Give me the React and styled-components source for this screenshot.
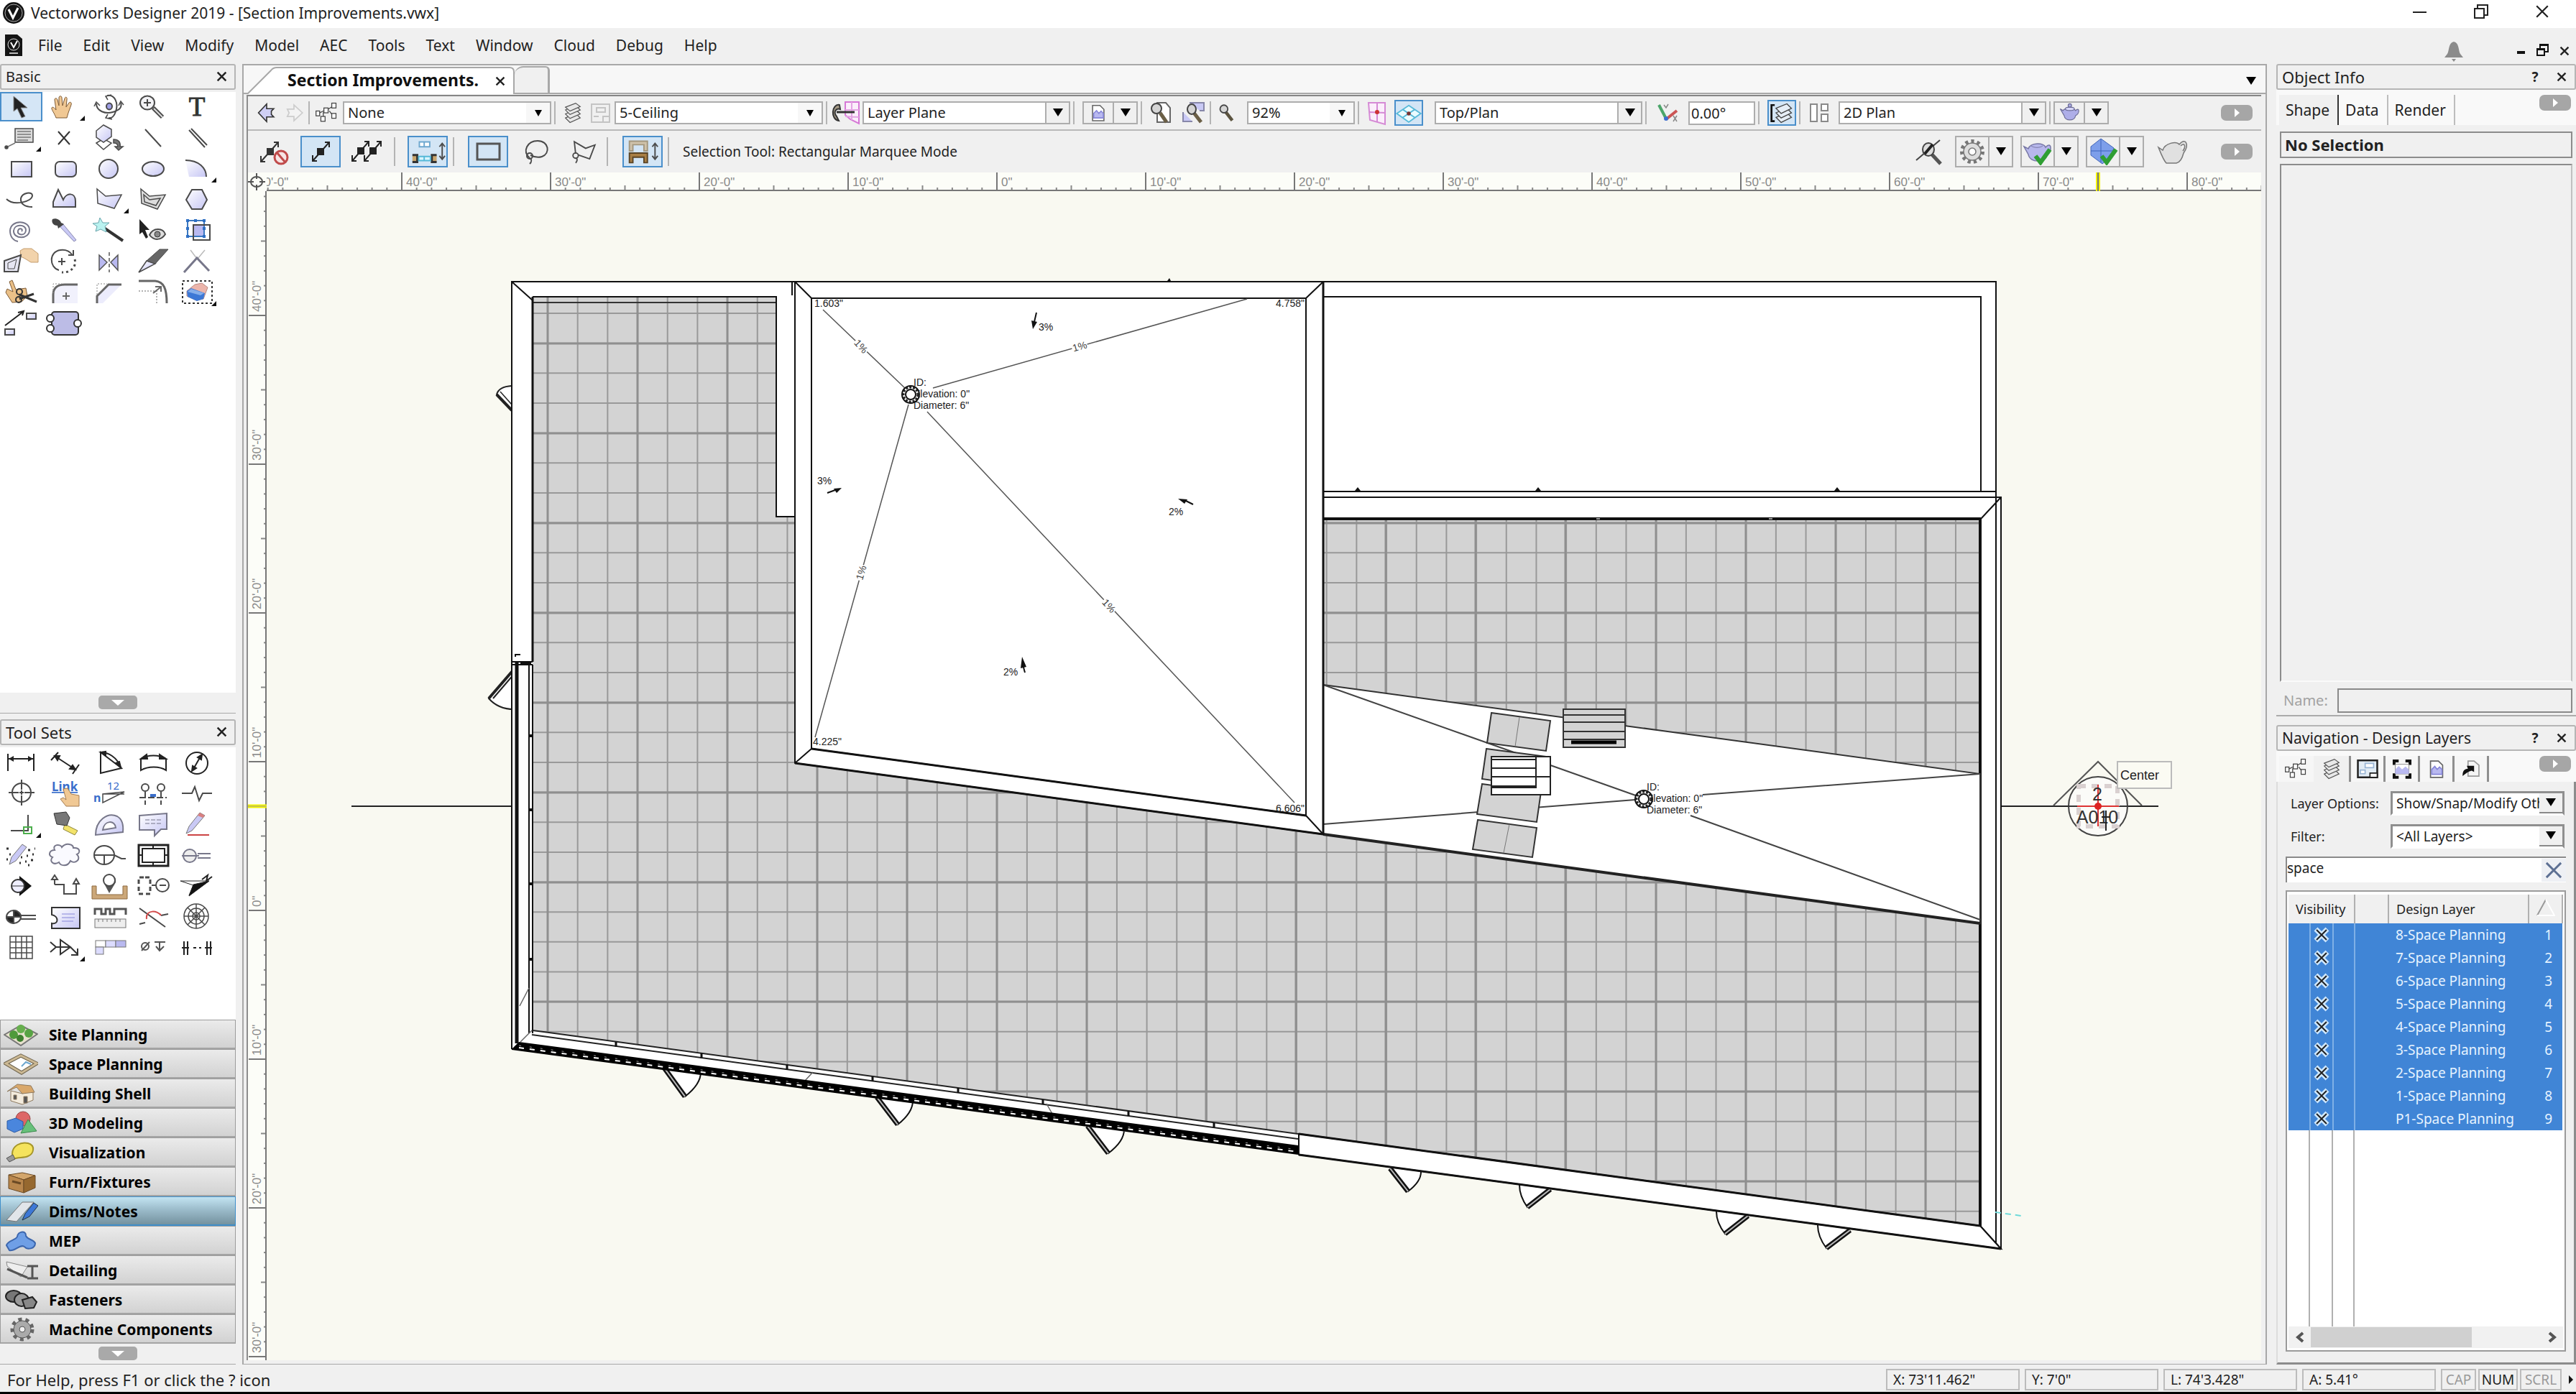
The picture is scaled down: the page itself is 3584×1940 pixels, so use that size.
import React from "react";
import styled, { createGlobalStyle, css } from "styled-components";

const GlobalStyle = createGlobalStyle`
  * { box-sizing: border-box; }
  body { margin: 0; background: #f0f0f0; }
  button, select, input { font: inherit; color: inherit; margin: 0; }
  button { background: none; border: 0; padding: 0; }
`;

const Window = styled.div`
  min-height: 100vh;
  display: grid;
  grid-template-rows: 39px 50px 1fr 38px;
  border-bottom: 3px solid #000;
  background: #f0f0f0;
  color: #222;
  font-family: "Noto Sans", "Open Sans", sans-serif;
  font-size: 21px;
  line-height: 24px;
`;

const TitleBar = styled.header`
  display: flex;
  align-items: center;
  gap: 8px;
  padding: 0 34px 4px 3px;
  background: #fff;
`;

const Spring = styled.div`
  flex: 1;
`;

const WindowButton = styled.button`
  width: 26px;
  height: 26px;
  margin-left: 51px;
`;

const MenuBar = styled.nav`
  display: flex;
  align-items: center;
  padding: 0 4px 3px 6px;
`;

const MenuItem = styled.button`
  margin-left: ${(p) => (p.$first ? 21 : 29)}px;
`;

const MdiButton = styled.button`
  width: 24px;
  height: 24px;
  margin: 14px 0 0 ${(p) => p.$gap || 6}px;
`;

const Workspace = styled.div`
  display: grid;
  grid-template-columns: 328px 1fr 417px;
  min-height: 0;
`;

const Column = styled.aside`
  display: flex;
  flex-direction: column;
  min-width: 0;
`;

const PanelTitle = styled.div`
  display: flex;
  align-items: center;
  flex: none;
  height: 36px;
  padding: 0 8px 0 6px;
  border: 2px solid #b5b5b5;
  border-radius: 3px;
  font-size: ${(p) => p.$size || 20}px;
`;

const PanelButton = styled.button`
  width: 20px;
  height: 26px;
  margin-left: 17px;
  font-size: 19px;
  font-weight: bold;
`;

const ToolPanel = styled.div`
  display: grid;
  grid-template-columns: repeat(5, 61px);
  grid-auto-rows: 41px;
  align-content: start;
  row-gap: 2px;
  margin-top: 3px;
  background: #fff;
  ${(p) => (p.$grow ? "flex: 1;" : "height: 379px;")}
`;

const ToolButton = styled.button`
  display: flex;
  align-items: center;
  justify-content: center;
  width: 59px;
  height: 41px;
  svg {
    overflow: visible;
  }
  ${(p) =>
    p.$active &&
    css`
      background: #d5e6f6;
      outline: 2px solid #4a8fcb;
      outline-offset: -2px;
    `}
`;

const FoldRow = styled.div`
  display: flex;
  justify-content: center;
  flex: none;
  height: 29px;
  padding-top: 4px;
  border-bottom: 1px solid #a8a8a8;
  margin-bottom: ${(p) => (p.$last ? 0 : 8)}px;
`;

const FoldButton = styled.button`
  display: grid;
  place-items: center;
  width: 54px;
  height: 19px;
  border-radius: 5px;
  background: #a9a9a9;
`;

const SetList = styled.div`
  display: flex;
  flex-direction: column;
`;

const SetButton = styled.button`
  display: flex;
  align-items: center;
  gap: 15px;
  height: 41px;
  padding: 2px 0 0 4px;
  border: 1px solid #9c9c9c;
  border-bottom: 2px solid #a4a4a4;
  background: ${(p) =>
    p.$active
      ? "linear-gradient(#c3e4f2, #9cbccb 45%, #74929f)"
      : "linear-gradient(#ebebeb, #d2d2d2)"};
  ${(p) => p.$active && "border-color: #3f8fca;"}
  color: #000;
  font-size: 21px;
  font-weight: bold;
`;

const Doc = styled.main`
  display: flex;
  flex-direction: column;
  min-width: 0;
  margin: 0 13px 0 9px;
  border: 2px solid #a8a8a8;
  border-bottom-width: 1px;
`;

const TabBar = styled.div`
  display: flex;
  align-items: flex-end;
  height: 40px;
  padding: 0 10px 0 4px;
  background: #f7f7f7;
  border-bottom: 2px solid #a8a8a8;
`;

const DocTab = styled.button`
  position: relative;
  display: flex;
  align-items: center;
  justify-content: space-between;
  width: 373px;
  height: 37px;
  padding: 0 13px 0 57px;
  font-size: 23px;
  font-weight: bold;
  color: #111;
`;

const TabShape = styled.svg`
  position: absolute;
  left: 0;
  top: 0;
  z-index: 0;
`;

const TabLabel = styled.span`
  position: relative;
`;

const EmptyTab = styled.button`
  width: 49px;
  height: 37px;
  background: #f0f0f0;
  border: 1px solid #a8a8a8;
  border-width: 2px 3px 0 0;
  border-radius: 12px 6px 0 0;
`;

const TabMenu = styled.button`
  width: 20px;
  height: 36px;
`;

const Frame = styled.div`
  display: flex;
  flex-direction: column;
  flex: 1;
  margin: 1px 6px 5px 4px;
  border-top: 2px solid #858585;
  border-left: 2px solid #8d8d8d;
  font-size: 20px;
`;

const Toolbar = styled.div`
  display: flex;
  align-items: center;
  flex: none;
  gap: ${(p) => (p.$tall ? 7 : 4)}px;
  height: ${(p) => (p.$tall ? 58 : 48)}px;
  padding: 0 12px 0 8px;
  ${(p) => !p.$tall && "border-bottom: 2px solid #b9b9b9;"}
`;

const BarButton = styled.button`
  display: flex;
  align-items: center;
  justify-content: center;
  flex: none;
  width: ${(p) => p.$w}px;
  height: ${(p) => (p.$tall ? 44 : 36)}px;
  margin-right: ${(p) => p.$gap || 0}px;
  svg {
    flex: none;
  }
  ${(p) =>
    p.$active &&
    css`
      background: #d3e5f5;
      border: 2px solid #4a8fcb;
    `}
`;

const Sep = styled.div`
  flex: none;
  width: 2px;
  height: ${(p) => (p.$tall ? 40 : 32)}px;
  margin-right: ${(p) => p.$gap || 0}px;
  background: #b4b4b4;
`;

const SelectFrame = styled.div`
  display: flex;
  flex: none;
  width: ${(p) => p.$w}px;
  height: 32px;
  border: 2px solid #adadad;
  background: #fff;
`;

const SelectField = styled.select`
  flex: 1;
  min-width: 0;
  padding: 0 0 0 5px;
  border: 0;
  outline: 0;
  background: none;
  appearance: none;
`;

const ArrowCell = styled.span`
  display: grid;
  place-items: center;
  width: 33px;
  background: ${(p) => (p.$line ? "#f0f0f0" : "#f7f7f7")};
  ${(p) => p.$line && "border-left: 2px solid #adadad;"}
`;

const AngleField = styled.input`
  flex: none;
  width: 93px;
  height: 33px;
  padding: 0 2px;
  border: 2px solid #adadad;
  background: #fff;
`;

const SplitFrame = styled.div`
  display: flex;
  flex: none;
  width: ${(p) => (p.$tall ? 81 : 77)}px;
  height: ${(p) => (p.$tall ? 44 : 32)}px;
  margin-right: ${(p) => (p.$tall ? 3 : 0)}px;
  border: 2px solid #adadad;
`;

const SplitMain = styled.button`
  display: flex;
  align-items: center;
  justify-content: center;
  flex: 1;
  min-width: 0;
  svg {
    flex: none;
  }
`;

const SplitArrow = styled.button`
  display: grid;
  place-items: center;
  width: 33px;
  border-left: 2px solid #adadad;
`;

const Pill = styled.button`
  display: grid;
  place-items: center;
  flex: none;
  width: 44px;
  height: 22px;
  margin-left: auto;
  border-radius: 7px;
  background: #a6a6a6;
`;

const ModeText = styled.span`
  font-size: 19px;
  white-space: nowrap;
`;

const Sheet = styled.div`
  display: grid;
  flex: 1;
  grid-template-columns: 26px 1fr;
  grid-template-rows: 26px 1fr;
  background: #fcfdf8;
  svg text {
    font-family: "Liberation Sans", Arial, sans-serif;
  }
`;

const Corner = styled.svg`
  width: 26px;
  height: 26px;
`;

const RulerTop = styled.svg`
  width: 100%;
  height: 26px;
`;

const RulerLeft = styled.svg`
  width: 26px;
  height: 100%;
`;

const Plan = styled.svg`
  width: 100%;
  height: 100%;
  background: #f9f9f1;
`;

const TabStrip = styled.div`
  display: flex;
  align-items: stretch;
  flex: none;
  height: ${(p) => p.$h}px;
  padding: 7px 7px 0 4px;
  background: #f9f9f9;
`;

const InfoTab = styled.button`
  padding: 0 11px 0 9px;
  border-right: 2px solid ${(p) => (p.$active ? "#333" : "#bdbdbd")};
  background: ${(p) => (p.$active ? "#f0f0f0" : "none")};
`;

const IconTab = styled.button`
  display: flex;
  align-items: center;
  justify-content: center;
  width: ${(p) => (p.$active ? 52 : 48)}px;
  border-right: 3px solid ${(p) => (p.$plain ? "transparent" : "#8f8f8f")};
  background: ${(p) => (p.$active ? "#f0f0f0" : "#f6f6f6")};
  svg {
    flex: none;
  }
`;

const SelectionBox = styled.div`
  flex: none;
  height: 37px;
  margin: 9px 5px 8px;
  padding: 4px 5px;
  border: 2px solid #8c8c8c;
  font-size: 22px;
  font-weight: bold;
`;

const InfoBody = styled.div`
  flex: 1;
  margin: 0 5px;
  border: 2px solid #8c8c8c;
  border-right-color: #c0c0c0;
  border-bottom-color: #fafafa;
`;

const NameRow = styled.div`
  display: flex;
  align-items: center;
  gap: 13px;
  height: 48px;
  padding: 5px 5px 0 10px;
  margin-bottom: 12px;
  border-bottom: 2px solid #ababab;
  color: #a2a2a2;
  font-size: 20px;
`;

const NameField = styled.input`
  flex: 1;
  min-width: 0;
  height: 34px;
  border: 2px solid #8a8a8a;
  background: #f0f0f0;
`;

const NavBody = styled.div`
  display: flex;
  flex-direction: column;
  height: 811px;
  padding: 12px 11px 15px;
  border-left: 2px solid #dcdcdc;
  border-right: 3px solid #8c8c8c;
  border-bottom: 3px solid #8c8c8c;
  font-size: 19px;
`;

const OptionRow = styled.div`
  display: flex;
  align-items: center;
  justify-content: space-between;
  height: 36px;
  margin-bottom: 10px;
  padding: 0 2px 0 7px;
  font-size: 18px;
`;

const DeepSelect = styled.div`
  display: flex;
  width: 242px;
  height: 34px;
  border: 3px solid #8f8f8f;
  border-bottom-color: #fff;
  background: #fff;
  font-size: 19px;
`;

const DeepArrow = styled.span`
  display: grid;
  place-items: center;
  width: 32px;
  background: #f0f0f0;
  border-bottom: 2px solid #8a8a8a;
`;

const SearchRow = styled.div`
  display: flex;
  align-items: center;
  height: 36px;
  margin-bottom: 11px;
  border-top: 2px solid #8a8a8a;
  border-left: 2px solid #8a8a8a;
  background: #fff;
`;

const SearchField = styled.input`
  flex: 1;
  min-width: 0;
  padding: 0 0 6px;
  border: 0;
  outline: 0;
  background: none;
`;

const ClearButton = styled.button`
  display: grid;
  place-items: center;
  width: 34px;
  height: 32px;
  background: #eef0f4;
`;

const LayerBox = styled.div`
  display: flex;
  flex-direction: column;
  flex: 1;
  padding: 4px 2px 3px;
  border: 2px solid #9b9b9b;
  background: #fff;
`;

const LayerTable = styled.table`
  width: 100%;
  table-layout: fixed;
  border-collapse: collapse;
  th {
    height: 40px;
    padding: 0 0 0 10px;
    background: #f0f0f0;
    border-right: 2px solid #b0b0b0;
    font-weight: normal;
    font-size: 18px;
    text-align: left;
    white-space: nowrap;
  }
  td {
    height: 32px;
    padding: 0 0 0 10px;
    line-height: 28px;
    background: #4085d6;
    color: #e6f3ff;
    white-space: nowrap;
  }
`;

const MarkCell = styled.td`
  && {
    padding: 0;
    border-right: 2px solid #7fb0e6;
  }
  svg {
    display: block;
    margin: 0 auto;
    border: solid #7fb0e6;
    border-width: 0 2px;
  }
`;

const NumberCell = styled.td`
  && {
    padding: 0 14px 0 0;
    text-align: right;
  }
`;

const Guides = styled.div`
  display: flex;
  flex: 1;
`;

const Guide = styled.div`
  width: ${(p) => p.$w}px;
  border-right: 2px solid #b0b0b0;
`;

const ScrollBar = styled.div`
  display: grid;
  grid-template-columns: 31px 224px 1fr 31px;
  place-items: center;
  height: 30px;
  background: #f1f1f1;
`;

const Thumb = styled.div`
  width: 100%;
  height: 28px;
  background: #d0d0d0;
`;

const StatusBar = styled.footer`
  display: flex;
  align-items: center;
  gap: 3px;
  padding: 4px 3px 0 10px;
`;

const HelpText = styled.span`
  font-size: 22px;
`;

const StatusCell = styled.span`
  height: 30px;
  width: ${(p) => p.$w}px;
  padding: 1px 0 0 ${(p) => (p.$mode ? 0 : 8)}px;
  border: 2px solid #bcbcbc;
  margin-right: ${(p) => (p.$mode ? 0 : 4)}px;
  text-align: ${(p) => (p.$mode ? "center" : "left")};
  font-size: 19px;
  color: ${(p) => (p.$off ? "#9a9a9a" : "#222")};
`;

const S = "#4a4a4a";
const LAV = "url(#lavender)";

// Icons are drawn in a 54 x 38 box around (27, 19).
const icons = {
  select: <path d="M16 4V25L21 21L27 34L32 32L26 20H35Z" fill="#222" stroke="#888" />,
  pan: (
    <path
      d="M14 34C12 28 7 22 8 20C9 18 12 20 14 23L12 9C12 6 15 6 16 9L18 17V6C18 3 22 3 22 6L23 17L26 7C27 4 30 5 29 9L28 19L32 13C34 11 36 13 35 16L31 27L29 34Z"
      fill="#f0c894"
      stroke="#7d5a35"
    />
  ),
  flyover: (
    <g fill="none" stroke={S} strokeWidth="2">
      <path d="M24 3C35 1 40 14 36 25C34 32 30 35 26 34M9 14C9 25 22 29 32 26C42 23 45 19 43 13" />
      <path d="M30 2L22 4L25 9M25 29L22 34L31 36M6 18L9 12L14 17M40 17L43 11L47 16" strokeWidth="1.5" />
      <ellipse cx="27" cy="18" rx="4" ry="4.5" fill="#9f9fe6" />
    </g>
  ),
  zoom: (
    <g stroke={S} strokeWidth="2">
      <path d="M27 20L40 33" strokeWidth="6" />
      <path d="M28 21L40 33" stroke="#ddd" strokeWidth="2" />
      <ellipse cx="19" cy="13" rx="10" ry="9.5" fill="#f2f2f5" />
      <path d="M14 13H24M19 8V18" />
    </g>
  ),
  text: (
    <text x="27" y="31" textAnchor="middle" fontSize="37" fontFamily="Liberation Serif" fill="#333" stroke="#333">
      T
    </text>
  ),
  callout: (
    <g stroke={S} strokeWidth="1.5">
      <rect x="18" y="6" width="25" height="19" fill="#dcdcdc" />
      <path d="M21 10H40M21 14H40M21 18H40M21 22H36M18 26L6 32" fill="none" stroke="#777" />
      <circle cx="6" cy="32" r="2" fill={S} />
    </g>
  ),
  locus: <path d="M17 10L33 28M33 10L17 28" stroke="#333" strokeWidth="2" />,
  layerPlane: (
    <g stroke={S} strokeWidth="1.5">
      <path d="M9 26L19 20L30 26L19 35Z" fill="#fff" />
      <path d="M9 9L19 1L30 7V17L19 25L9 18Z" fill={LAV} />
      <path d="M33 21C40 21 43 25 42 31H46L40 36L35 31H39C39 27 37 26 33 26Z" fill="#777" />
    </g>
  ),
  line: <path d="M16 7L38 31" stroke={S} strokeWidth="2" />,
  doubleLine: <path d="M16 8L38 32M19 6L41 29" stroke={S} strokeWidth="2" />,
  rect: <rect x="13" y="9" width="28" height="21" fill={LAV} stroke={S} strokeWidth="2" />,
  roundRect: <rect x="13" y="9" width="29" height="21" rx="6" fill={LAV} stroke={S} strokeWidth="2" />,
  oval: <ellipse cx="26" cy="19" rx="13" ry="13" fill={LAV} stroke={S} strokeWidth="2" />,
  circle: <ellipse cx="27" cy="19" rx="15" ry="10" fill={LAV} stroke={S} strokeWidth="2" />,
  arc: (
    <g>
      <path d="M11 7C30 7 40 18 40 30H16Z" fill={LAV} />
      <path d="M11 7C30 7 40 18 40 30" fill="none" stroke={S} strokeWidth="2" />
    </g>
  ),
  freehand: (
    <path d="M6 18C16 28 42 22 42 13C42 7 28 9 26 17C25 25 32 29 42 29" fill="none" stroke={S} strokeWidth="2" />
  ),
  bezier: <path d="M10 29V22L17 5L24 19C28 9 41 8 41 21V29Z" fill={LAV} stroke={S} strokeWidth="2" />,
  polygon: <path d="M10 4L22 14L44 12L34 31L11 24Z" fill={LAV} stroke={S} strokeWidth="1.5" />,
  doublePolygon: (
    <g fill="none" stroke={S} strokeWidth="1.5">
      <path d="M10 4L22 14L44 12L33 32L11 24Z" fill="#ddd" />
      <path d="M14 12L22 19L37 17L31 27L15 22Z" />
    </g>
  ),
  hexagon: <path d="M20 5H34L41 19L34 32H20L12 19Z" fill={LAV} stroke={S} strokeWidth="2" />,
  spiral: (
    <path
      d="M27 20C30 17 24 14 22 19C20 26 33 27 33 18C33 10 17 9 16 19C15 31 38 32 38 18C38 4 12 3 11 19C11 28 16 33 22 34"
      fill="none"
      stroke="#77778a"
      strokeWidth="2"
    />
  ),
  eyedropper: (
    <g>
      <path d="M18 12L23 9L42 32L39 34Z" fill="#c9c9f5" stroke="#8888b0" />
      <path d="M9 3C14 1 20 4 21 8L25 10L17 16L16 12C10 12 7 7 9 3Z" fill="#444" />
    </g>
  ),
  wand: (
    <g>
      <path d="M21 16L46 33" stroke="#333" strokeWidth="4" />
      <path d="M14 1L18 8L27 8L21 13L23 21L15 17L8 20L10 13L4 9L12 8Z" fill="#b9f2f0" stroke="#6ba6ad" />
    </g>
  ),
  visibility: (
    <g>
      <path d="M8 3V24L12 21L17 30L20 28L16 18H22Z" fill="#222" />
      <path d="M22 25C27 14 41 15 44 24C38 33 28 33 22 25Z" fill="#ddd" stroke={S} strokeWidth="2" />
      <circle cx="33" cy="24" r="4" fill="#888" stroke="#333" />
    </g>
  ),
  reshape: (
    <g strokeWidth="2">
      <rect x="22" y="11" width="15" height="16" fill="#b9b9f0" stroke="none" />
      <rect x="14" y="5" width="23" height="22" fill="none" stroke="#3b78c0" />
      <rect x="22" y="11" width="23" height="21" fill="none" stroke={S} />
      <path d="M12 3H16V7H12ZM23 3H27V7H23ZM35 3H39V7H35ZM12 25H16V29H12ZM35 25H39V29H35ZM12 14H16V18H12ZM35 14H39V18H35Z" fill="#2e6fc4" />
    </g>
  ),
  dragger: (
    <g stroke={S}>
      <path d="M25 4L30 1H41L50 8V20H40L32 15L26 12Z" fill="#f2d3ab" stroke="#c49c6c" />
      <path d="M3 18L26 10L22 33H3Z" fill="#e6e6f2" strokeWidth="2" />
      <path d="M8 21L20 16L17 29H8Z" fill="none" />
    </g>
  ),
  rotate: (
    <g fill="none" stroke={S} strokeWidth="2">
      <path d="M18 31C4 27 4 5 20 3C28 2 33 5 36 9M31 10H38V3" />
      <path d="M40 16C43 26 34 35 22 34" strokeDasharray="3 4" strokeWidth="3" />
      <path d="M22 14V24M17 19H27" />
    </g>
  ),
  mirror: (
    <g stroke="#555" strokeWidth="1.5">
      <path d="M13 10L24 20L13 31ZM39 10L29 20L39 31Z" fill="#b9b9f0" />
      <path d="M27 6V34" strokeDasharray="5 3" />
    </g>
  ),
  split: (
    <g stroke={S}>
      <path d="M7 34L18 18L30 22Z" fill={LAV} strokeWidth="1.5" />
      <path d="M18 18L36 2H48L30 22Z" fill="#666" />
    </g>
  ),
  trim: (
    <g strokeWidth="3">
      <path d="M18 3L27 15M38 3L28 15" stroke="#bbb" strokeWidth="1.5" />
      <path d="M9 34L27 14L44 32" fill="none" stroke="#77778a" />
    </g>
  ),
  clip: (
    <g>
      <path d="M10 4L14 2L19 15L33 13L35 24L27 32L14 33L5 19L7 14L15 18Z" fill="#eac088" stroke="#7d5a35" />
      <path d="M24 22L48 32M24 28L44 21" stroke="#333" strokeWidth="3" />
      <circle cx="24" cy="18" r="4" fill="none" stroke="#333" strokeWidth="2" />
      <circle cx="23" cy="29" r="4" fill="none" stroke="#333" strokeWidth="2" />
    </g>
  ),
  fillet: (
    <g fill="none">
      <path d="M10 34V22C10 12 17 8 26 8H44V34Z" fill="#f1f1fc" />
      <path d="M10 34V22C10 12 17 8 26 8H44" stroke="#666" strokeWidth="3" />
      <path d="M10 20V7H22" stroke="#888" strokeDasharray="2 2" />
      <path d="M28 19V29M23 24H33" stroke="#666" strokeWidth="2" />
    </g>
  ),
  chamfer: (
    <g fill="none">
      <path d="M10 34V24L26 8H44L18 34Z" fill="#ececfc" />
      <path d="M10 34V24L26 8H44" stroke="#666" strokeWidth="3" />
      <path d="M10 22V7H24" stroke="#888" strokeDasharray="2 2" />
    </g>
  ),
  offset: (
    <g fill="none" stroke="#666">
      <path d="M7 3H30C42 4 46 14 46 34" strokeWidth="3" />
      <path d="M7 17H32V34" strokeDasharray="2 2" />
      <path d="M27 20L37 12M30 11H38V18" strokeWidth="2" />
    </g>
  ),
  eraser: (
    <g>
      <rect x="7" y="3" width="41" height="31" fill="none" stroke="#333" strokeWidth="2" strokeDasharray="3 3" />
      <path d="M24 8L34 6L42 12L36 28L26 30L13 24V17Z" fill="#ecb5ab" stroke="#b98a82" />
      <path d="M13 17L19 13L38 20L36 28L27 31L14 25Z" fill="#3d78d6" />
      <path d="M14 18L19 14L37 20L32 23Z" fill="#86aeea" />
    </g>
  ),
  connect: (
    <g stroke={S} strokeWidth="2">
      <path d="M4 22L29 3M22 4L30 2L28 8" fill="none" stroke="#222" />
      <rect x="34" y="5" width="13" height="8" fill={LAV} />
      <rect x="4" y="27" width="13" height="8" fill={LAV} />
    </g>
  ),
  plug: (
    <g stroke="#333" strokeWidth="2">
      <rect x="8" y="3" width="37" height="32" rx="4" fill="#bcbce6" />
      <circle cx="6" cy="12" r="5" fill="#fff" />
      <circle cx="6" cy="26" r="5" fill="#fff" />
      <circle cx="44" cy="19" r="5" fill="#fff" />
    </g>
  ),
  dimLinear: (
    <g stroke="#222" strokeWidth="2">
      <path d="M8 7V31M44 7V31M9 14H43" />
      <path d="M9 14L16 10V18ZM43 14L36 10V18Z" fill="#222" stroke="none" />
    </g>
  ),
  dimAngled: (
    <g stroke="#222" strokeWidth="2">
      <path d="M7 16L17 5M37 35L46 22M12 10L41 29" />
      <path d="M12 10L19 10L16 16ZM41 29L33 28L37 23Z" fill="#222" />
    </g>
  ),
  dimAngular: (
    <g stroke="#222" strokeWidth="2" fill="none">
      <path d="M15 5V34L44 27ZM15 5C26 5 38 12 43 26" />
      <path d="M15 5L22 4V9ZM43 26L36 20L41 18Z" fill="#222" />
    </g>
  ),
  dimArc: (
    <g stroke="#222" strokeWidth="2" fill="none">
      <path d="M10 14V30C20 24 36 24 45 30V14M10 14C20 8 35 8 45 14" />
      <path d="M10 14L18 8L19 14ZM45 14L36 8L36 14Z" fill="#222" />
    </g>
  ),
  dimRadial: (
    <g stroke="#222" strokeWidth="2" fill="none">
      <ellipse cx="27" cy="20" rx="15" ry="15" />
      <path d="M21 30L33 9" />
      <path d="M20 31L21 24L26 27ZM34 8L28 12L33 15Z" fill="#222" />
    </g>
  ),
  centerMark: (
    <g stroke={S} strokeWidth="2" fill="none">
      <ellipse cx="27" cy="18" rx="13" ry="13" />
      <path d="M27 0V14M27 22V36M9 18H23M31 18H45M24 18H30M27 15V21" />
    </g>
  ),
  link: (
    <g>
      <text x="8" y="16" fontSize="17" fontWeight="bold" fill="#3a6ecb" textDecoration="underline">Link</text>
      <path d="M24 13L30 12L35 20L46 22L46 37H28L20 27L24 25L28 28Z" fill="#f0c894" stroke="#a67d50" />
    </g>
  ),
  slope: (
    <g>
      <text x="24" y="14" fontSize="15" fill="#3a6ecb">12</text>
      <text x="5" y="31" fontSize="16" fontWeight="bold" fill="#3a6ecb">n</text>
      <path d="M18 32V20L48 17ZM18 20H48" fill="none" stroke={S} strokeWidth="1.5" />
    </g>
  ),
  chain: (
    <g stroke={S} strokeWidth="2" fill="none">
      <circle cx="16" cy="11" r="5" />
      <circle cx="38" cy="11" r="5" />
      <path d="M16 17V35M38 17V35M8 25H46" strokeDasharray="9 3" />
      <path d="M23 22H31" stroke="#3a6ecb" strokeWidth="4" />
    </g>
  ),
  breakLine: <path d="M6 19H20L24 10L30 29L35 19H48" fill="none" stroke={S} strokeWidth="2" />,
  datum: (
    <g strokeWidth="2" fill="none">
      <path d="M12 28H36V6" stroke={S} />
      <rect x="30" y="23" width="11" height="9" stroke="#4cae4c" />
    </g>
  ),
  tape: (
    <g>
      <path d="M26 19L44 28L40 34L24 26Z" fill="#f3e36a" stroke="#8d853b" />
      <path d="M11 4L28 2L33 10L29 21L15 19Z" fill="#777" stroke="#333" />
    </g>
  ),
  protractor: (
    <path d="M8 34C8 14 24 2 38 8C45 12 47 20 46 30ZM18 27L36 24C35 13 20 13 18 27Z" fill={LAV} fillRule="evenodd" stroke="#77778a" strokeWidth="2" />
  ),
  comment: (
    <g>
      <path d="M8 7L46 4V26H38L29 35V27H8Z" fill={LAV} stroke="#77778a" strokeWidth="2" />
      <path d="M16 13H38M16 18H38" stroke="#77778a" strokeDasharray="6 2" />
    </g>
  ),
  redline: (
    <g>
      <path d="M14 34H44" stroke="#c44" strokeWidth="2" />
      <path d="M12 32L16 22L31 3L38 7L20 28Z" fill="#c9c9f5" stroke="#777" />
      <path d="M31 3L38 7L35 10L28 7Z" fill="#d98080" />
    </g>
  ),
  stipple: (
    <g>
      <path d="M6 10H9M10 18H12M6 25H8M36 12H39M42 18H44M34 20H36M40 26H43M32 28H34M26 22H28M24 30H26M36 33H38M45 10H46" stroke="#333" strokeWidth="3" />
      <path d="M10 32L13 22L28 4L34 8L19 27Z" fill="#c9c9f5" stroke="#777" />
    </g>
  ),
  cloud: (
    <path d="M12 12C8 4 20 3 22 8C28 1 38 4 38 9C48 8 48 16 43 18C50 25 40 32 34 27C30 36 20 34 18 29C10 34 4 27 9 22C2 19 5 12 12 12Z" fill="#fafaff" stroke="#77778a" strokeWidth="2" />
  ),
  detailRef: (
    <g stroke={S} strokeWidth="2" fill="none">
      <ellipse cx="20" cy="19" rx="14" ry="13" />
      <path d="M6 19H34L44 24L50 24M20 19V32" />
    </g>
  ),
  frame: (
    <g stroke="#222" fill="none">
      <rect x="7" y="5" width="41" height="29" strokeWidth="3" />
      <rect x="12" y="10" width="31" height="19" strokeWidth="2" />
      <path d="M27 5V10M27 29V34M7 19H12M43 19H48" strokeWidth="2" />
    </g>
  ),
  sectionLine: (
    <g stroke="#77778a" strokeWidth="2" fill="none">
      <ellipse cx="17" cy="20" rx="9" ry="9" fill="#eee" />
      <path d="M6 20H30M28 17H46M28 23H46" />
    </g>
  ),
  elevation: (
    <g>
      <path d="M24 5L41 19L24 33Z" fill="#111" />
      <ellipse cx="22" cy="19" rx="9" ry="9" fill="#eef" stroke="#333" strokeWidth="2" />
      <path d="M13 19H31" stroke="#333" />
    </g>
  ),
  sectionArrow: (
    <path d="M12 17V9M8 10L12 4L16 10ZM12 17H25V30H42V16M38 16L42 9L46 16Z" fill="none" stroke={S} strokeWidth="2" />
  ),
  siteMarker: (
    <g>
      <path d="M3 19H9V31H46V19H52V37H3Z" fill="#cba779" stroke="#8e6b40" />
      <path d="M27 29L19 14C17 0 38 0 36 14Z" fill="#555" />
      <ellipse cx="27" cy="11" rx="8" ry="8" fill="#fff" stroke={S} strokeWidth="2" />
    </g>
  ),
  detailCut: (
    <g stroke={S} strokeWidth="2" fill="none">
      <path d="M14 7H7V30H14M16 7H23V30H16" strokeWidth="3" strokeDasharray="6 4" />
      <ellipse cx="40" cy="18" rx="9" ry="9" />
      <path d="M25 18H31M36 18H45" />
    </g>
  ),
  northArrow: (
    <g stroke="#222">
      <path d="M4 12L44 12L16 32L22 18Z" fill="#fff" />
      <path d="M44 12L16 33L22 17Z" fill="#111" />
      <path d="M34 10L42 4L40 12L48 6" fill="none" strokeWidth="2" />
    </g>
  ),
  marker: (
    <g stroke={S} strokeWidth="2">
      <ellipse cx="16" cy="19" rx="10" ry="9" fill="#fff" />
      <path d="M16 10A10 9 0 0 1 26 19H16ZM16 28A10 9 0 0 1 6 19H16Z" fill="#222" />
      <path d="M26 17H47M26 22H47" />
    </g>
  ),
  noteBox: (
    <g>
      <path d="M8 6H47V35H8V28C18 30 18 18 8 16Z" fill={LAV} stroke="#333" strokeWidth="2" />
      <path d="M22 15H40M22 20H40M22 25H38" stroke="#8787d9" />
    </g>
  ),
  ruler: (
    <g stroke="#777" fill="none">
      <path d="M7 16V8H16V15H22V8H28V15H34V8H50V16" stroke="#555" strokeWidth="3" />
      <rect x="7" y="22" width="43" height="12" fill="#eee" />
      <path d="M12 22V26M18 22V26M24 22V26M30 22V26M36 22V26M42 22V26" />
    </g>
  ),
  curve: (
    <g fill="none" strokeWidth="2">
      <path d="M8 7L44 33M8 29L16 27M38 17L48 15" stroke={S} />
      <path d="M18 22C16 8 34 10 38 17" stroke="#d34a4a" />
    </g>
  ),
  polar: (
    <g fill="none" stroke={S} strokeWidth="1.5">
      <ellipse cx="26" cy="18" rx="17" ry="17" />
      <ellipse cx="26" cy="18" rx="11" ry="11" />
      <ellipse cx="26" cy="18" rx="5" ry="5" />
      <path d="M9 18H43M26 1V35M14 6L38 30M38 6L14 30" />
    </g>
  ),
  grid: (
    <path d="M11 3H42V34H11ZM19 3V34M27 3V34M34 3V34M11 11H42M11 19H42M11 26H42" fill="none" stroke={S} strokeWidth="1.5" />
  ),
  flow: (
    <g fill="none" stroke="#333" strokeWidth="2">
      <path d="M6 11L14 18L6 25M14 18H34L44 28M20 8V28L34 18ZM44 20V29H35" />
    </g>
  ),
  legend: (
    <g stroke="#777">
      <rect x="8" y="9" width="14" height="9" fill="#fff" />
      <rect x="22" y="9" width="14" height="9" fill="#dcdcff" />
      <rect x="36" y="9" width="14" height="9" fill="#b9b9f0" />
      <rect x="8" y="18" width="11" height="10" fill="#dcdcff" />
    </g>
  ),
  tolerance: (
    <g fill="none" stroke="#555" strokeWidth="2">
      <ellipse cx="16" cy="17" rx="5" ry="5" />
      <path d="M11 23L22 11M29 11H44M36 11V22M31 17L36 23L42 17" />
    </g>
  ),
  centerLine: <path d="M6 19H16M22 19H26M30 19H33M38 19H48M9 10V29M14 10V29M41 10V29M46 10V29" stroke="#222" strokeWidth="2" />,

  back: <path d="M27 4L13 19L27 34V26H39L35 22V16L39 12H27Z" fill="#cfcff5" stroke="#333" strokeWidth="2" />,
  forward: <path d="M27 6L41 19L27 32V25H16L19 19L16 13H27Z" fill="#f3f3f3" stroke="#ccc" strokeWidth="2" />,
  classes: (
    <g fill="#fff" stroke="#444" strokeWidth="1.5">
      <path d="M14 20L22 16L30 13L38 8M22 18L22 28M32 16L38 24" fill="none" />
      <rect x="10" y="16" width="6" height="8" />
      <rect x="18" y="25" width="7" height="8" />
      <rect x="23" y="11" width="7" height="8" />
      <rect x="36" y="3" width="7" height="8" />
      <rect x="36" y="20" width="7" height="8" />
    </g>
  ),
  layers: (
    <g fill="#e8e8e8" stroke="#555" strokeWidth="1.5">
      <path d="M14 28L32 20L40 28L22 36Z" />
      <path d="M14 21L32 13L40 21L22 29Z" />
      <path d="M14 14L32 6L40 14L22 22Z" />
      <path d="M14 9L32 2L40 8L22 16Z" />
    </g>
  ),
  sheetLayer: (
    <g fill="none" stroke="#c4c4c4" strokeWidth="2">
      <rect x="14" y="7" width="25" height="25" />
      <path d="M21 12H33V18H21ZM17 24H24M30 24H39V32H30Z" />
    </g>
  ),
  eyePlane: (
    <g>
      <path d="M19 8C8 6 6 28 18 30L15 24C10 18 14 12 20 14Z" fill="#a59a86" stroke="#333" strokeWidth="2" />
      <path d="M27 4H46V34L34 28L27 22Z" fill="#fbeefb" stroke="#d678d6" strokeWidth="2" />
      <path d="M36 4V29M27 15H46M27 24L46 25" stroke="#e3a5e3" strokeWidth="2" />
      <path d="M15 18H40" stroke="#333" strokeWidth="3" />
    </g>
  ),
  viewSheet: (
    <g strokeWidth="2">
      <path d="M17 6H30L37 13V33H17Z" fill="#fff" stroke="#666" />
      <path d="M19 20L24 15L28 20L32 16L36 20V28H19Z" fill="#b9b9f0" stroke="#8787d9" />
    </g>
  ),
  pageZoom: (
    <g>
      <path d="M22 5H34L40 12V32H22Z" fill="#fff" stroke="#666" strokeWidth="2" />
      <path d="M26 19L35 32" stroke="#6b5f46" strokeWidth="5" />
      <ellipse cx="21" cy="13" rx="7" ry="7" fill="#d5d5d5" stroke="#444" strokeWidth="2" />
    </g>
  ),
  fit: (
    <g>
      <path d="M22 5H42V16H36M13 18V31H26" fill="#c9c9f5" stroke="#8787a9" strokeWidth="2" />
      <path d="M28 19L38 32" stroke="#6b5f46" strokeWidth="5" />
      <ellipse cx="25" cy="14" rx="6" ry="7" fill="#d5d5d5" stroke="#444" strokeWidth="2" />
    </g>
  ),
  magnifier: (
    <g>
      <path d="M22 18L32 31" stroke="#5b533f" strokeWidth="5" />
      <ellipse cx="19" cy="13" rx="6" ry="6" fill="#d5d5d5" stroke="#444" strokeWidth="2" />
    </g>
  ),
  plane: (
    <g fill="#fbeefb" stroke="#d58ad5" strokeWidth="2">
      <path d="M15 5H38V35L17 29Z" />
      <path d="M27 5V32M16 18L38 19" />
      <circle cx="27" cy="18" r="2" fill="#c33" stroke="#c33" />
    </g>
  ),
  workPlane: (
    <g fill="#e9fbff" stroke="#56b9d8" strokeWidth="2">
      <path d="M27 8L45 20L27 33L9 20Z" />
      <path d="M18 14L36 26M36 14L18 26" />
      <circle cx="27" cy="20" r="2" fill="#733" stroke="#733" />
    </g>
  ),
  axes: (
    <g fill="none" strokeWidth="4">
      <path d="M15 8L25 27" stroke="#4ca56a" />
      <path d="M25 28L40 16" stroke="#c55" />
      <circle cx="25" cy="27" r="3" fill="#3d6fd0" stroke="none" />
      <path d="M22 8L25 12L28 7M35 23L40 31M40 23L35 31" stroke="#888" strokeWidth="1.5" />
    </g>
  ),
  unified: (
    <g fill="#e6eef6" stroke="#444" strokeWidth="1.5">
      <path d="M16 7H11V32H16" fill="none" stroke="#111" strokeWidth="3" />
      <path d="M18 26L35 19L42 26L26 34Z" />
      <path d="M18 19L35 12L42 19L26 27Z" />
      <path d="M18 12L35 5L42 12L26 20Z" />
    </g>
  ),
  multiView: (
    <g fill="#fff" stroke="#8a8a8a" strokeWidth="2">
      <rect x="14" y="7" width="9" height="24" />
      <rect x="29" y="7" width="9" height="9" />
      <rect x="29" y="21" width="9" height="10" />
    </g>
  ),
  render: (
    <g stroke="#6c6c96" strokeWidth="1.5">
      <path d="M11 12L16 15C19 10 35 10 38 15C45 8 46 20 38 24C37 34 19 34 18 24Z" fill="#aeaee8" />
      <ellipse cx="28" cy="12" rx="8" ry="3" fill="#d9d9fb" />
      <circle cx="28" cy="6" r="3" fill="#aeaee8" />
    </g>
  ),
  noScale: (
    <g stroke="#333" strokeWidth="2">
      <path d="M8 33L32 6M8 25V33H14M26 6H32V13" fill="none" />
      <rect x="17" y="15" width="8" height="8" fill="#333" />
      <ellipse cx="36" cy="27" rx="9" ry="9" fill="#f7e4e4" stroke="#c04b4b" strokeWidth="3" />
      <path d="M30 20L42 34" stroke="#c04b4b" strokeWidth="3" />
    </g>
  ),
  singleScale: (
    <g stroke="#222" strokeWidth="2">
      <path d="M16 32L39 6M16 24V32H22M33 6H39V13" fill="none" />
      <rect x="23" y="15" width="8" height="8" fill="#222" />
    </g>
  ),
  multiScale: (
    <g stroke="#222" strokeWidth="2">
      <path d="M6 32L29 5M6 24V32H12M23 5H29V12M23 32L46 5M23 24V32H29M40 5H46V12" fill="none" />
      <rect x="14" y="14" width="8" height="8" fill="#222" />
      <rect x="31" y="14" width="8" height="8" fill="#222" />
    </g>
  ),
  wallInsert: (
    <g strokeWidth="2">
      <path d="M15 5H30V12H15ZM22 5V12" fill="#fff" stroke="#6ea8cf" />
      <path d="M5 24H12V34H5M40 24H33V34H40" fill="#c9a56d" stroke="#333" strokeWidth="3" />
      <path d="M14 26H31V32H14ZM22 26V32" fill="#d8f5ff" stroke="#56b9d8" />
      <path d="M48 9V28M44 12L48 7L52 12M44 25L48 30L52 25" fill="none" stroke={S} />
    </g>
  ),
  marquee: <rect x="12" y="8" width="31" height="22" fill="none" stroke="#555" strokeWidth="3" />,
  lasso: (
    <g fill="none" stroke={S} strokeWidth="2">
      <path d="M17 28C6 18 14 4 28 4C44 4 46 22 34 26C28 28 22 26 18 24" />
      <ellipse cx="17" cy="25" rx="4" ry="4" />
      <path d="M18 28C20 31 20 33 17 36" />
    </g>
  ),
  polyLasso: (
    <g fill="none" stroke={S} strokeWidth="2">
      <path d="M15 22L13 4L30 14L44 9L36 30L19 24" />
      <ellipse cx="15" cy="25" rx="4" ry="4" />
      <path d="M16 28C18 31 18 33 15 36" />
    </g>
  ),
  wallMode: (
    <g strokeWidth="2">
      <path d="M8 18V4H34V18H29V9H13V18Z" fill="#cfc2aa" stroke="#a3977f" />
      <path d="M8 35V21H34V35H29V27H13V35Z" fill="#a97f45" stroke="#5b4526" />
      <path d="M45 9V28M41 12L45 7L49 12M41 25L45 30L49 25" fill="none" stroke={S} />
    </g>
  ),
  slashZoom: (
    <g>
      <path d="M10 31L43 3" stroke="#444" strokeWidth="2" />
      <path d="M31 22L44 36" stroke="#555" strokeWidth="5" />
      <ellipse cx="27" cy="16" rx="8" ry="9" fill="#ddd" stroke="#444" strokeWidth="2" />
      <path d="M22 22L33 9" stroke="#222" strokeWidth="4" />
    </g>
  ),
  gear: (
    <g>
      <circle cx="27" cy="19" r="14" fill="none" stroke="#777" strokeWidth="6" strokeDasharray="4 4" />
      <circle cx="27" cy="19" r="12" fill="#ddd" stroke="#777" strokeWidth="1.5" />
      <circle cx="27" cy="19" r="5" fill="#fff" stroke="#777" strokeWidth="1.5" />
    </g>
  ),
  renderCheck: (
    <g>
      <path d="M8 12L14 15C17 6 36 6 38 13C46 4 48 18 40 24C38 35 16 35 14 23Z" fill="#b7b7ec" stroke="#7777a5" strokeWidth="1.5" />
      <path d="M18 11C22 14 30 14 34 11" fill="none" stroke="#7777a5" />
      <path d="M24 25L31 34L44 16" fill="none" stroke="#2f9e33" strokeWidth="6" />
    </g>
  ),
  modelCheck: (
    <g>
      <path d="M24 1L42 14L37 27L26 36L10 24V12Z" fill="#7d9eea" stroke="#4265b8" />
      <path d="M10 18H40M24 2V34" stroke="#3f62bb" />
      <path d="M25 25L32 34L45 16" fill="none" stroke="#2f9e33" strokeWidth="6" />
    </g>
  ),
  teapot: (
    <g stroke="#777" strokeWidth="1.5">
      <path d="M8 13L14 17C17 7 33 4 37 9C45 -1 52 8 43 21C41 29 38 34 33 35H19C15 31 12 23 8 13Z" fill="#e0e0e0" />
      <path d="M39 11C44 6 47 11 42 18" fill="#f0f0f0" />
    </g>
  ),
  viewport: (
    <g>
      <path d="M13 12V5H21M33 5H41V12M13 27V34H21M33 34H41V27" fill="none" stroke="#111" strokeWidth="5" />
      <path d="M15 11H39V28H15Z" fill="#fff" stroke="#777" />
      <path d="M15 20L21 14L27 20L33 15L39 20V28H15Z" fill="#b9b9f0" />
    </g>
  ),
  sheets: (
    <g strokeWidth="2">
      <rect x="11" y="5" width="32" height="28" fill="#e3edf6" stroke="#222" strokeWidth="3" />
      <path d="M23 10H37V17H23ZM15 21H23V27H15Z" fill="#fff" stroke="#9ab6d6" />
      <path d="M31 26H43V33H31Z" fill="#fff" stroke="#222" />
    </g>
  ),
  reference: (
    <g>
      <path d="M22 6H32L40 13V31H22Z" fill="#f4f4f4" stroke="#999" strokeWidth="2" />
      <path d="M13 31C13 22 16 19 22 19L20 14H32V24L28 22C23 23 19 26 13 31Z" fill="#111" />
    </g>
  ),
};

const setIcons = {
  site: (
    <g>
      <path d="M1 18L24 5L47 17L24 33Z" fill="#e8e1cd" stroke="#777" strokeWidth="2" />
      <circle cx="14" cy="18" r="6" fill="#4f9a3b" />
      <circle cx="24" cy="10" r="6" fill="#67b04e" />
      <circle cx="35" cy="16" r="6" fill="#58a344" />
      <circle cx="23" cy="23" r="5" fill="#3f8030" />
    </g>
  ),
  space: (
    <g fill="none">
      <path d="M3 17L24 6L46 17L25 30Z" fill="#fff" stroke="#6f644e" strokeWidth="5" />
      <path d="M3 17L24 6L46 17L25 30Z" stroke="#cbb893" strokeWidth="3" />
      <path d="M25 21L31 15L38 18" stroke="#6ea8cf" strokeWidth="2" />
    </g>
  ),
  shell: (
    <g stroke="#8e7a60">
      <path d="M10 14V28L26 33L41 27V14L26 18Z" fill="#f3ebdd" />
      <path d="M5 15L19 5L38 7L43 16L26 18L18 9Z" fill="#d9a86b" />
      <path d="M14 20H18V26H14ZM28 22H33V31H28Z" fill="#555" />
    </g>
  ),
  modeling: (
    <g>
      <circle cx="27" cy="12" r="10" fill="#d66" stroke="#944" />
      <path d="M5 15L17 11L27 16V26L15 31L5 26Z" fill="#4a86dd" stroke="#2c5ba5" />
      <path d="M34 13L46 29L24 32Z" fill="#67c07a" stroke="#3c8a4d" />
    </g>
  ),
  bulb: (
    <g>
      <path d="M12 20C12 8 24 3 34 5C45 8 42 20 34 23C28 26 20 24 14 27Z" fill="#f5e35d" stroke="#a6962a" strokeWidth="2" />
      <path d="M4 26L13 21L16 27L8 31Z" fill="#999" stroke="#555" />
    </g>
  ),
  furniture: (
    <g stroke="#6b4a25">
      <path d="M7 8L26 5L44 9L28 15Z" fill="#d3a66c" />
      <path d="M7 8V27L28 33V15Z" fill="#b9874d" />
      <path d="M28 15L44 9V26L28 33Z" fill="#96682f" />
      <path d="M12 17L24 20" strokeWidth="3" />
    </g>
  ),
  dims: (
    <g>
      <path d="M4 30L26 5H42L18 32Z" fill="#e1e5ea" stroke="#777" />
      <path d="M26 30L30 21L42 6L48 10L36 25Z" fill="#3d78d6" stroke="#234" />
    </g>
  ),
  mep: (
    <path d="M4 24C6 17 17 17 19 12C20 4 32 3 31 11C34 17 41 15 44 21C44 29 33 31 29 26C22 22 16 33 8 31Z" fill="#6f9fe6" stroke="#3c66ad" strokeWidth="2" />
  ),
  beam: (
    <g>
      <path d="M4 6L33 13L24 27L5 12Z" fill="#eee" stroke="#888" />
      <path d="M33 12H48M40 12V29M33 29H48M5 16L33 28" stroke="#555" strokeWidth="3" fill="none" />
    </g>
  ),
  fastener: (
    <g stroke="#222" strokeWidth="2">
      <ellipse cx="14" cy="13" rx="11" ry="8" fill="#777" />
      <ellipse cx="25" cy="18" rx="10" ry="9" fill="#999" />
      <path d="M26 18L40 14L46 21L42 29L30 30Z" fill="#888" />
    </g>
  ),
  machine: (
    <g>
      <circle cx="26" cy="18" r="14" fill="none" stroke="#666" strokeWidth="5" strokeDasharray="5 5" />
      <circle cx="26" cy="18" r="12" fill="#aaa" stroke="#555" />
      <circle cx="26" cy="18" r="4" fill="#eee" stroke="#555" />
    </g>
  ),
};

const Icon = ({ name, corner, w = 54, h = 38 }) => (
  <svg width={w} height={h} viewBox="0 0 54 38" aria-hidden="true">
    {icons[name]}
    {corner && <path d="M54 31V38H47Z" fill="#111" />}
  </svg>
);

const Caret = () => (
  <svg width="18" height="12" viewBox="0 0 18 12" aria-hidden="true">
    <path d="M2 0H16L9 11Z" fill="#000" />
  </svg>
);

const SmallCaret = () => (
  <svg width="10" height="9" viewBox="0 0 10 9" aria-hidden="true">
    <path d="M0 0H10L5 9Z" fill="#000" />
  </svg>
);

const Cross = ({ size = 18, color = "#222", width = 3 }) => (
  <svg width={size} height={size} viewBox="0 0 18 18" aria-hidden="true">
    <path d="M2 2L16 16M16 2L2 16" stroke={color} strokeWidth={width} />
  </svg>
);

const basicTools = [
  "select", "pan+", "flyover", "zoom", "text",
  "callout+", "locus", "layerPlane", "line", "doubleLine",
  "rect", "roundRect", "oval", "circle", "arc+",
  "freehand", "bezier", "polygon+", "doublePolygon", "hexagon",
  "spiral", "eyedropper", "wand", "visibility", "reshape",
  "dragger", "rotate", "mirror", "split", "trim",
  "clip", "fillet", "chamfer", "offset", "eraser+",
  "connect", "plug",
];

const noteTools = [
  "dimLinear", "dimAngled", "dimAngular", "dimArc", "dimRadial",
  "centerMark", "link", "slope", "chain", "breakLine",
  "datum+", "tape", "protractor", "comment", "redline",
  "stipple", "cloud", "detailRef", "frame", "sectionLine",
  "elevation", "sectionArrow", "siteMarker", "detailCut", "northArrow",
  "marker", "noteBox", "ruler", "curve", "polar",
  "grid", "flow+", "legend", "tolerance", "centerLine",
];

const toolSets = [
  ["site", "Site Planning"],
  ["space", "Space Planning"],
  ["shell", "Building Shell"],
  ["modeling", "3D Modeling"],
  ["bulb", "Visualization"],
  ["furniture", "Furn/Fixtures"],
  ["dims", "Dims/Notes"],
  ["mep", "MEP"],
  ["beam", "Detailing"],
  ["fastener", "Fasteners"],
  ["machine", "Machine Components"],
];

const menus = ["File", "Edit", "View", "Modify", "Model", "AEC", "Tools", "Text", "Window", "Cloud", "Debug", "Help"];

const layers = [
  "8-Space Planning",
  "7-Space Planning",
  "6-Space Planning",
  "5-Space Planning",
  "4-Space Planning",
  "3-Space Planning",
  "2-Space Planning",
  "1-Space Planning",
  "P1-Space Planning",
];

const Tools = ({ names }) =>
  names.map((entry) => {
    const name = entry.replace("+", "");
    return (
      <ToolButton key={name} $active={name === "select"} aria-label={name}>
        <Icon name={name} corner={entry.endsWith("+")} />
      </ToolButton>
    );
  });

const Fold = ({ last }) => (
  <FoldRow $last={last}>
    <FoldButton aria-label="Collapse">
      <svg width="20" height="10" viewBox="0 0 20 10">
        <path d="M1 1H19L10 9Z" fill="#fff" />
      </svg>
    </FoldButton>
  </FoldRow>
);

const MorePill = () => (
  <Pill aria-label="More">
    <svg width="8" height="12" viewBox="0 0 8 12">
      <path d="M1 0L8 6L1 12Z" fill="#fff" />
    </svg>
  </Pill>
);

const Select = ({ label, value, w, line }) => (
  <SelectFrame $w={w}>
    <SelectField aria-label={label}>
      <option>{value}</option>
    </SelectField>
    <ArrowCell $line={line}>{line ? <Caret /> : <SmallCaret />}</ArrowCell>
  </SelectFrame>
);

const Split = ({ icon, tall }) => (
  <SplitFrame $tall={tall}>
    <SplitMain aria-label={icon}>
      <Icon name={icon} w={tall ? 54 : 46} h={tall ? 38 : 30} />
    </SplitMain>
    <SplitArrow aria-label={icon + " options"}>
      <Caret />
    </SplitArrow>
  </SplitFrame>
);

const STEP = 207;

// Rulers and plan share one coordinate space; each svg shifts it to its own corner.
const TopTicks = () => {
  const out = [];
  for (let i = -1; i <= 12; i++) {
    const x = 559 + i * STEP;
    out.push(
      <g key={i}>
        <path d={`M${x} 240V265`} stroke="#777" strokeWidth="2" />
        <text x={x + 6} y="259" fontSize="17" fill="#8a8a8a">
          {i === 4 ? `0"` : `${Math.abs(4 - i) * 10}'-0"`}
        </text>
        {[1, 2, 3, 4, 5, 6, 7, 8, 9].map((n) => (
          <path
            key={n}
            d={`M${x + n * 20.7} ${n === 5 ? 258 : 261}V265`}
            stroke="#888"
            strokeWidth="2"
          />
        ))}
      </g>
    );
  }
  return out;
};

const LeftTicks = () => {
  const out = [];
  for (let i = -1; i <= 7; i++) {
    const y = 439 + i * STEP;
    out.push(
      <g key={i}>
        <path d={`M346 ${y}H370`} stroke="#777" strokeWidth="2" />
        {i >= 0 && (
          <text transform={`translate(363 ${y - 5}) rotate(-90)`} fontSize="17" fill="#8a8a8a">
            {i === 4 ? `0"` : `${Math.abs(4 - i) * 10}'-0"`}
          </text>
        )}
        {[1, 2, 3, 4, 5, 6, 7, 8, 9].map((n) => (
          <path
            key={n}
            d={`M${n === 5 ? 363 : 367} ${y + n * 20.7}H370`}
            stroke="#888"
            strokeWidth="2"
          />
        ))}
      </g>
    );
  }
  return out;
};

const boldX = [762, 887, 1012, 1137, 1262, 1387, 1512, 1678, 1803, 1928, 2053, 2178, 2304, 2429, 2554, 2679];
const boldY = [478, 603, 728, 853, 978, 1103, 1228, 1394, 1519, 1644];

const Hatch = () => {
  const thinX = [];
  const thinY = [];
  for (let i = 0; i < 48; i++) thinX.push(762 + i * 41.68);
  for (let i = 0; i < 31; i++) thinY.push(436 + i * 41.66);
  return (
    <g stroke="#999">
      <path d={thinX.map((x) => `M${x} 400V1760`).join("")} strokeWidth="2" />
      <path d={thinY.map((y) => `M741 ${y}H2755`).join("")} strokeWidth="2" />
      <path d={boldX.map((x) => `M${x} 400V1760`).join("")} stroke="#8f8f8f" strokeWidth="3" />
      <path d={boldY.map((y) => `M741 ${y}H2755`).join("")} stroke="#8f8f8f" strokeWidth="3" />
      <path d="M741 421H1080" stroke="#333" strokeWidth="2" />
    </g>
  );
};

const Drain = ({ x, y }) => (
  <g>
    <g fontSize="14" fill="#222">
      <text x={x + 4} y={y - 12}>ID:</text>
      <text x={x + 4} y={y + 4}>Elevation: 0"</text>
      <text x={x + 4} y={y + 20}>Diameter: 6"</text>
    </g>
    <circle cx={x} cy={y} r="12" fill="#fff" stroke="#111" strokeWidth="2" />
    <circle cx={x} cy={y} r="10" fill="none" stroke="#222" strokeWidth="3" strokeDasharray="3 2" />
    <circle cx={x} cy={y} r="7" fill="#fff" stroke="#111" strokeWidth="2" />
  </g>
);

const SlopeLine = ({ from, to, at, angle }) => (
  <g>
    <path d={`M${from}L${to}`} stroke="#555" strokeWidth="1.5" />
    <g transform={`translate(${at}) rotate(${angle})`}>
      <rect x="-11" y="-6" width="22" height="12" fill="#fff" />
      <text y="5" textAnchor="middle" fontSize="14" fill="#444">1%</text>
    </g>
  </g>
);

const doors = [
  [924, 1486, 953, 1526, 975, 1492],
  [1220, 1527, 1249, 1565, 1270, 1532],
  [1513, 1567, 1542, 1605, 1564, 1572],
  [1934, 1626, 1959, 1658, 1977, 1631],
  [2157, 1655, 2125, 1680, 2114, 1649],
  [2432, 1692, 2400, 1717, 2388, 1686],
  [2574, 1712, 2541, 1737, 2529, 1705],
];

const Door = ({ d }) => (
  <g fill="none" stroke="#111" strokeWidth="2">
    <path d={`M${d[0]} ${d[1]}L${d[2]} ${d[3]}Q${d[4]} ${(d[3] + d[5]) / 2} ${d[4]} ${d[5]}`} fill="#fff" />
    <path d={`M${d[0]} ${d[1]}L${d[2]} ${d[3]}`} strokeWidth="7" />
    <path d={`M${d[0]} ${d[1]}L${d[2]} ${d[3]}`} stroke="#bbb" strokeWidth="2" />
  </g>
);

const mullions = [857, 976, 1095, 1214, 1333, 1451, 1570, 1689];

const FloorPlan = () => (
  <Plan>
    <g transform="translate(-371 -266)">
      <path d="M489 1122H720M2777 1122H3003" stroke="#222" strokeWidth="2" />
      <g fill="#fff" stroke="#222" strokeWidth="2">
        <path d="M712 537Q694 538 691 549L712 571" />
        <path d="M691 549L712 571" strokeWidth="4" />
        <path d="M696 545L712 563" strokeWidth="1.5" />
        <path d="M718 928L680 972Q694 988 718 987" />
        <path d="M718 928L680 972" strokeWidth="4" />
        <path d="M722 930L686 972" fill="none" />
      </g>
      {doors.map((d) => (
        <Door key={d[0]} d={d} />
      ))}

      <path d="M712 392H2777V692H2784V1738L1806 1607L712 1460Z" fill="#fff" />
      <clipPath id="deck">
        <path d="M741 413H1080V719H1106V1062L1841 1161L2755 1285V1705L741 1434Z" />
        <path d="M1841 723H2755V1077L1841 953Z" />
      </clipPath>
      <g clipPath="url(#deck)">
        <rect x="712" y="392" width="2072" height="1346" fill="#d3d3d3" />
        <Hatch />
      </g>

      <g fill="none" stroke="#111" strokeWidth="2">
        <path d="M712 1460V392H2777V1738M741 413H1080V719H1106" />
        <path d="M1102 392V411" />
        <path d="M712 392L741 418" />
        <path d="M741 413V921" strokeWidth="3" />
        <path d="M1841 413H2756V684M1841 684H2777M1841 692H2784V1738" />
        <path d="M2784 692L2756 722" />
        <path d="M1841 722H2756" strokeWidth="4" />
        <path d="M2755 722V1706" strokeWidth="4" />
        <path d="M2755 1706L2784 1738" />
      </g>
      <path d="M1885 683L1889 678L1893 683ZM2136 683L2140 678L2144 683ZM2552 683L2556 678L2560 683ZM1624 391L1627 387L1629 391Z" fill="#111" />
      <path d="M2221 722H2226M2461 722H2466" stroke="#999" strokeWidth="2" />

      <g fill="none" stroke="#111">
        <path d="M712 921H741M712 925H741" strokeWidth="2" />
        <path d="M717 914V911H724" strokeWidth="2" />
        <path d="M719 922V1452" strokeWidth="5" />
        <path d="M724 923L739 923" strokeWidth="3" />
        <path d="M736 925V1438M741 925V1438" strokeWidth="2" />
        <path d="M735 1024H741M735 1127H741M735 1230H741M735 1335H741" strokeWidth="4" />
        <path d="M723 1400L736 1375M724 1450L740 1434" stroke="#666" strokeWidth="1.5" />
      </g>

      <path d="M741 1434L1806 1578M740 1440L1806 1585" fill="none" stroke="#222" strokeWidth="2" />
      <path d={mullions.map((x) => `M${x} ${1434 + (x - 741) * 0.1352}v7`).join("")} stroke="#111" strokeWidth="3" />
      <path d="M1120 1504L1131 1492M1456 1536L1464 1550" stroke="#666" strokeWidth="1.5" />
      <path d="M712 1460L722 1450L1806 1594V1606Z" fill="#000" />
      <path d="M722 1458L1806 1603" stroke="#fff" strokeWidth="2" strokeDasharray="7 8" />
      <path d="M722 1455L1806 1600" stroke="#999" strokeWidth="1" strokeDasharray="3 12" />
      <path d="M712 1460L1806 1606" stroke="#000" strokeWidth="2" />
      <path d="M1807 1578L2755 1706L2784 1738L1807 1607Z" fill="#fff" stroke="#111" strokeWidth="2" />
      <path d="M1807 1578L2755 1706M1807 1607L2784 1738" stroke="#111" strokeWidth="3" />
      <path d="M2776 1687L2812 1692" stroke="#6fdada" strokeWidth="2" strokeDasharray="8 6" />

      <path d="M1841 953L2755 1077V1285L1841 1161Z" fill="#fff" stroke="#333" strokeWidth="2" />
      <path d="M1841 1161L2755 1285" stroke="#222" strokeWidth="4" />
      <path d="M1841 953L2287 1111M2369 1106L2755 1077M2352 1135L2755 1280M1841 1147L2275 1113" stroke="#444" strokeWidth="2" />
      <g fill="#d3d3d3" stroke="#333" strokeWidth="2">
        <path d="M2075 992L2157 1003L2151 1045L2069 1034Z" />
        <path d="M2068 1042L2152 1053L2146 1096L2062 1084Z" />
        <path d="M2062 1091L2144 1102L2138 1144L2055 1133Z" />
        <path d="M2056 1141L2138 1152L2132 1193L2049 1182Z" />
        <path d="M2114 998L2108 1039M2100 1147L2092 1187" stroke="#777" strokeWidth="1" />
        <rect x="2175" y="987" width="86" height="53" />
        <path d="M2175 995H2261M2175 1005H2261M2175 1018H2261M2175 1029H2261" />
        <path d="M2186 1033H2249" stroke="#000" strokeWidth="5" />
      </g>
      <g fill="#fff" stroke="#222" strokeWidth="2">
        <rect x="2075" y="1053" width="82" height="53" />
        <path d="M2137 1053V1097M2075 1057H2137M2075 1069H2137M2075 1081H2157" />
        <path d="M2075 1095H2137" strokeWidth="4" />
      </g>
      <Drain x={2287} y={1112} />

      <path d="M1106 392H1841V1161L1106 1062Z" fill="#fff" stroke="#111" strokeWidth="2" />
      <path d="M1129 415H1817V1135L1129 1042Z" fill="none" stroke="#111" strokeWidth="2" />
      <path d="M1106 392L1129 415M1841 392L1817 415M1106 1062L1129 1042M1817 1135L1841 1161" stroke="#111" strokeWidth="2" />
      <path d="M1106 1062L1841 1161M1129 1042L1817 1135" stroke="#111" strokeWidth="3" />
      <path d="M1841 392V1161" stroke="#111" strokeWidth="3" />
      <SlopeLine from="1145 431" to="1260 541" at="1198 482" angle={48} />
      <SlopeLine from="1298 540" to="1735 416" at="1502 482" angle={-16} />
      <SlopeLine from="1264 563" to="1134 1026" at="1198 797" angle={-74} />
      <SlopeLine from="1290 573" to="1801 1117" at="1543 843" angle={47} />
      <Drain x={1267} y={549} />
      <g fontSize="14" fill="#222">
        <text x="1133" y="427">1.603"</text>
        <text x="1775" y="427">4.758"</text>
        <text x="1131" y="1037">4.225"</text>
        <text x="1775" y="1130">6.606"</text>
        <text x="1445" y="460">3%</text>
        <text x="1137" y="674">3%</text>
        <text x="1626" y="717">2%</text>
        <text x="1396" y="940">2%</text>
      </g>
      <path d="M1442 435L1439 448M1151 686L1162 682M1660 702L1650 697M1426 936L1423 925" stroke="#111" strokeWidth="2" />
      <path d="M1435 446L1443 448L1437 458ZM1160 680L1171 679L1164 686ZM1639 694L1652 695L1648 701ZM1420 930L1422 914L1428 928Z" fill="#111" />

      <path d="M2857 1121L2919 1060L2980 1121" fill="none" stroke="#555" strokeWidth="2" />
      <circle cx="2919" cy="1122" r="41" fill="#fbfbf8" stroke="#444" strokeWidth="2" />
      <path d="M2877 1122H2960" stroke="#333" strokeWidth="2" />
      <rect x="2892" y="1094" width="54" height="56" fill="none" stroke="#d9d0d0" strokeWidth="6" strokeDasharray="10 8" />
      <path d="M2919 1092V1150M2890 1122H2948" stroke="#d33" strokeWidth="2" />
      <g fontSize="25" fill="#333" textAnchor="middle">
        <text x="2918" y="1114">2</text>
        <text x="2918" y="1146">A010</text>
      </g>
      <path d="M2924 1137H2936M2930 1128V1156" stroke="#222" strokeWidth="2" />
      <circle cx="2919" cy="1122" r="5" fill="#d22" />
      <rect x="2946" y="1060" width="75" height="37" fill="#fbfbf3" stroke="#bbb" strokeWidth="2" />
      <text x="2950" y="1085" fontSize="18" fill="#222">Center</text>
    </g>
  </Plan>
);

const App = () => (
  <Window>
    <GlobalStyle />
    <TitleBar>
      <svg width="32" height="32" viewBox="0 0 32 32" aria-hidden="true">
        <defs>
          <linearGradient id="lavender" x1="0" y1="0" x2="1" y2="1">
            <stop offset="0" stopColor="#ffffff" />
            <stop offset="1" stopColor="#c6c6f4" />
          </linearGradient>
        </defs>
        <circle cx="16" cy="16" r="15" fill="#151515" />
        <circle cx="16" cy="16" r="12" fill="none" stroke="#aaa" />
        <path d="M9 11L15 23L22 9" fill="none" stroke="#fff" strokeWidth="3" />
      </svg>
      <span>Vectorworks Designer 2019 - [Section Improvements.vwx]</span>
      <Spring />
      <WindowButton aria-label="Minimize">
        <svg width="20" height="20"><path d="M0 11H19" stroke="#222" strokeWidth="2" /></svg>
      </WindowButton>
      <WindowButton aria-label="Restore">
        <svg width="20" height="20" fill="none" stroke="#222" strokeWidth="2">
          <path d="M1 6H14V19H1ZM5 6V1H19V15H14" />
        </svg>
      </WindowButton>
      <WindowButton aria-label="Close">
        <Cross size={20} width={2} />
      </WindowButton>
    </TitleBar>

    <MenuBar>
      <svg width="26" height="30" viewBox="0 0 26 30" aria-hidden="true">
        <path d="M1 0H18L25 6V30H1Z" fill="#151515" />
        <circle cx="13" cy="14" r="8" fill="none" stroke="#ddd" />
        <path d="M9 11L13 18L18 9" fill="none" stroke="#fff" strokeWidth="2" />
        <path d="M7 26H19" stroke="#bbb" strokeWidth="2" />
      </svg>
      {menus.map((m, i) => (
        <MenuItem key={m} $first={i === 0}>
          {m}
        </MenuItem>
      ))}
      <Spring />
      <MdiButton aria-label="Notifications">
        <svg width="28" height="28" viewBox="0 0 28 28">
          <path d="M14 0C6 2 8 12 5 17L1 22H27L23 17C20 12 22 2 14 0ZM11 24H17L14 28Z" fill="#8b8b8b" />
        </svg>
      </MdiButton>
      <MdiButton $gap={72} aria-label="Minimize document">
        <svg width="12" height="20"><path d="M0 15H11" stroke="#111" strokeWidth="4" /></svg>
      </MdiButton>
      <MdiButton aria-label="Restore document">
        <svg width="18" height="18" fill="none" stroke="#111" strokeWidth="2">
          <path d="M1 8H11V17H1ZM5 8V2H16V12H11M5 3H16M1 9H11" />
        </svg>
      </MdiButton>
      <MdiButton aria-label="Close document">
        <Cross size={14} />
      </MdiButton>
    </MenuBar>

    <Workspace>
      <Column>
        <PanelTitle>
          Basic
          <Spring />
          <PanelButton aria-label="Close Basic"><Cross size={15} /></PanelButton>
        </PanelTitle>
        <ToolPanel $grow>
          <Tools names={basicTools} />
        </ToolPanel>
        <Fold />
        <PanelTitle $size={22}>
          Tool Sets
          <Spring />
          <PanelButton aria-label="Close Tool Sets"><Cross size={15} /></PanelButton>
        </PanelTitle>
        <ToolPanel>
          <Tools names={noteTools} />
        </ToolPanel>
        <SetList>
          {toolSets.map(([icon, label]) => (
            <SetButton key={label} $active={label === "Dims/Notes"}>
              <svg width="48" height="36" viewBox="0 0 48 36" aria-hidden="true">
                {setIcons[icon]}
              </svg>
              {label}
            </SetButton>
          ))}
        </SetList>
        <Fold last />
      </Column>

      <Doc>
        <TabBar>
          <DocTab>
            <TabShape width="373" height="39">
              <path d="M1 39L34 6Q37 2 42 2H366Q372 2 372 8V39" fill="#fff" stroke="#a8a8a8" strokeWidth="2" />
            </TabShape>
            <TabLabel>Section Improvements.</TabLabel>
            <TabLabel><Cross size={14} /></TabLabel>
          </DocTab>
          <EmptyTab aria-label="New tab" />
          <Spring />
          <TabMenu aria-label="Documents"><Caret /></TabMenu>
        </TabBar>

        <Frame>
          <Toolbar>
            <BarButton $w={36} aria-label="Back"><Icon name="back" w={44} h={32} /></BarButton>
            <BarButton $w={32} aria-label="Forward"><Icon name="forward" w={48} h={32} /></BarButton>
            <Sep />
            <BarButton $w={38} aria-label="Classes"><Icon name="classes" w={48} h={32} /></BarButton>
            <Select label="Class" value="None" w={290} />
            <Sep />
            <BarButton $w={40} aria-label="Layers"><Icon name="layers" w={46} h={30} /></BarButton>
            <BarButton $w={30} aria-label="Sheet layer"><Icon name="sheetLayer" /></BarButton>
            <Select label="Layer" value="5-Ceiling" w={290} />
            <Sep />
            <BarButton $w={41} aria-label="Plane"><Icon name="eyePlane" /></BarButton>
            <Select label="Plane" value="Layer Plane" w={289} line />
            <Sep $gap={7} />
            <Split icon="viewSheet" />
            <Sep />
            <BarButton $w={44} aria-label="Fit to page"><Icon name="pageZoom" /></BarButton>
            <BarButton $w={38} aria-label="Fit to objects"><Icon name="fit" /></BarButton>
            <Sep />
            <BarButton $w={42} aria-label="Zoom"><Icon name="magnifier" w={50} h={34} /></BarButton>
            <Select label="Zoom level" value="92%" w={150} />
            <Sep />
            <BarButton $w={41} aria-label="Look at plane"><Icon name="plane" /></BarButton>
            <BarButton $w={40} $gap={12} $active aria-label="Working plane"><Icon name="workPlane" w={50} /></BarButton>
            <Select label="View" value="Top/Plan" w={289} line />
            <Sep />
            <BarButton $w={50} aria-label="Rotate plan"><Icon name="axes" /></BarButton>
            <AngleField aria-label="Angle" defaultValue="0.00°" />
            <Sep $gap={7} />
            <BarButton $w={40} $active aria-label="Unified view"><Icon name="unified" w={50} h={34} /></BarButton>
            <Sep />
            <BarButton $w={45} aria-label="Multiple panes"><Icon name="multiView" /></BarButton>
            <Select label="Projection" value="2D Plan" w={289} line />
            <Sep />
            <Split icon="render" />
            <MorePill />
          </Toolbar>

          <Toolbar $tall>
            <BarButton $w={58} $tall aria-label="Disable scaling"><Icon name="noScale" /></BarButton>
            <BarButton $w={56} $tall $active aria-label="Single scaling"><Icon name="singleScale" /></BarButton>
            <BarButton $w={60} $tall aria-label="Unrestricted scaling"><Icon name="multiScale" /></BarButton>
            <Sep $tall $gap={10} />
            <BarButton $w={56} $tall $active aria-label="Wall insertion"><Icon name="wallInsert" w={52} /></BarButton>
            <Sep $tall $gap={12} />
            <BarButton $w={56} $tall $active aria-label="Rectangular marquee"><Icon name="marquee" /></BarButton>
            <BarButton $w={66} $tall aria-label="Lasso marquee"><Icon name="lasso" /></BarButton>
            <BarButton $w={50} $tall aria-label="Polygonal marquee"><Icon name="polyLasso" w={50} /></BarButton>
            <Sep $tall $gap={13} />
            <BarButton $w={56} $tall $active aria-label="Wall mode"><Icon name="wallMode" w={52} /></BarButton>
            <Sep $tall $gap={12} />
            <ModeText>Selection Tool: Rectangular Marquee Mode</ModeText>
            <Spring />
            <BarButton $w={60} $tall aria-label="Quick zoom"><Icon name="slashZoom" /></BarButton>
            <Split icon="gear" tall />
            <Split icon="renderCheck" tall />
            <Split icon="modelCheck" tall />
            <BarButton $w={58} $gap={32} $tall aria-label="Render"><Icon name="teapot" /></BarButton>
            <MorePill />
          </Toolbar>

          <Sheet>
            <Corner>
              <g fill="none" stroke="#555" strokeWidth="2">
                <ellipse cx="12" cy="13" rx="8" ry="7" />
                <path d="M12 1V9M12 17V25M0 13H8M16 13H24" />
              </g>
            </Corner>
            <RulerTop>
              <g transform="translate(-371 -240)">
                <TopTicks />
                <path d="M371 265H4000" stroke="#777" strokeWidth="2" />
                <path d="M2919 240V266" stroke="#f2f200" strokeWidth="6" />
                <path d="M2919 240V266" stroke="#777" strokeWidth="2" />
              </g>
            </RulerTop>
            <RulerLeft>
              <g transform="translate(-345 -266)">
                <LeftTicks />
                <path d="M370 266V3000" stroke="#777" strokeWidth="2" />
                <path d="M345 1122H371" stroke="#f2f200" strokeWidth="5" />
                <path d="M345 1122H371" stroke="#999" />
              </g>
            </RulerLeft>
            <FloorPlan />
          </Sheet>
        </Frame>
      </Doc>

      <Column>
        <PanelTitle $size={22}>
          Object Info
          <Spring />
          <PanelButton aria-label="Help">?</PanelButton>
          <PanelButton aria-label="Close Object Info"><Cross size={14} /></PanelButton>
        </PanelTitle>
        <TabStrip $h={49}>
          <InfoTab $active>Shape</InfoTab>
          <InfoTab>Data</InfoTab>
          <InfoTab>Render</InfoTab>
          <MorePill />
        </TabStrip>
        <SelectionBox>No Selection</SelectionBox>
        <InfoBody />
        <NameRow>
          <label htmlFor="object-name">Name:</label>
          <NameField id="object-name" />
        </NameRow>
        <PanelTitle $size={21}>
          Navigation - Design Layers
          <Spring />
          <PanelButton aria-label="Help">?</PanelButton>
          <PanelButton aria-label="Close Navigation"><Cross size={14} /></PanelButton>
        </PanelTitle>
        <TabStrip $h={43}>
          <IconTab $plain aria-label="Classes"><Icon name="classes" w={46} h={32} /></IconTab>
          <IconTab $active aria-label="Design layers"><Icon name="layers" w={50} h={30} /></IconTab>
          <IconTab aria-label="Sheet layers"><Icon name="sheets" w={46} h={32} /></IconTab>
          <IconTab aria-label="Viewports"><Icon name="viewport" w={46} h={30} /></IconTab>
          <IconTab aria-label="Saved views"><Icon name="viewSheet" w={46} h={32} /></IconTab>
          <IconTab aria-label="References"><Icon name="reference" w={46} h={32} /></IconTab>
          <MorePill />
        </TabStrip>
        <NavBody>
          <OptionRow>
            <label htmlFor="layer-options">Layer Options:</label>
            <DeepSelect>
              <SelectField id="layer-options">
                <option>Show/Snap/Modify Others</option>
              </SelectField>
              <DeepArrow><Caret /></DeepArrow>
            </DeepSelect>
          </OptionRow>
          <OptionRow>
            <label htmlFor="layer-filter">Filter:</label>
            <DeepSelect>
              <SelectField id="layer-filter">
                <option>&lt;All Layers&gt;</option>
              </SelectField>
              <DeepArrow><Caret /></DeepArrow>
            </DeepSelect>
          </OptionRow>
          <SearchRow>
            <SearchField aria-label="Search layers" defaultValue="space" />
            <ClearButton aria-label="Clear search"><Cross size={26} color="#5c6f92" width={2} /></ClearButton>
          </SearchRow>
          <LayerBox>
            <LayerTable>
              <colgroup>
                <col width="92" />
                <col width="47" />
                <col />
                <col width="47" />
              </colgroup>
              <thead>
                <tr>
                  <th>Visibility</th>
                  <th />
                  <th>Design Layer</th>
                  <th>
                    <svg width="26" height="24" viewBox="0 0 26 24" aria-hidden="true">
                      <path d="M1 23L13 1" stroke="#999" strokeWidth="2" />
                      <path d="M13 1L25 23H1" stroke="#fff" strokeWidth="2" fill="none" />
                    </svg>
                  </th>
                </tr>
              </thead>
              <tbody>
                {layers.map((name, i) => (
                  <tr key={name}>
                    <MarkCell>
                      <svg width="34" height="32" viewBox="0 0 30 32" aria-hidden="true">
                        <path d="M7 8L23 24M23 8L7 24" stroke="#cfe8ff" strokeWidth="7" />
                        <path d="M8 9L22 23M22 9L8 23" stroke="#222" strokeWidth="2" />
                      </svg>
                    </MarkCell>
                    <td />
                    <td>{name}</td>
                    <NumberCell>{i + 1}</NumberCell>
                  </tr>
                ))}
              </tbody>
            </LayerTable>
            <Guides>
              <Guide $w={30} />
              <Guide $w={32} />
              <Guide $w={30} />
            </Guides>
            <ScrollBar>
              <svg width="12" height="16" fill="none" stroke="#555" strokeWidth="4"><path d="M10 2L3 8L10 14" /></svg>
              <Thumb />
              <span />
              <svg width="12" height="16" fill="none" stroke="#555" strokeWidth="4"><path d="M2 2L9 8L2 14" /></svg>
            </ScrollBar>
          </LayerBox>
        </NavBody>
      </Column>
    </Workspace>

    <StatusBar>
      <HelpText>For Help, press F1 or click the ? icon</HelpText>
      <Spring />
      <StatusCell $w={186}>X: 73'11.462"</StatusCell>
      <StatusCell $w={186}>Y: 7'0"</StatusCell>
      <StatusCell $w={186}>L: 74'3.428"</StatusCell>
      <StatusCell $w={186}>A: 5.41°</StatusCell>
      <StatusCell $w={49} $mode $off>CAP</StatusCell>
      <StatusCell $w={55} $mode>NUM</StatusCell>
      <StatusCell $w={58} $mode $off>SCRL</StatusCell>
      <svg width="14" height="14" aria-hidden="true"><path d="M7 1L13 7L7 13Z" fill="#111" /></svg>
    </StatusBar>
  </Window>
);

export default App;
